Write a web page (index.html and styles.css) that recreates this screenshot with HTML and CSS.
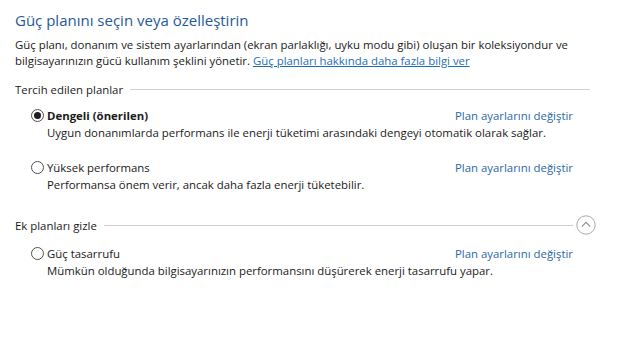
FILE: index.html
```html
<!DOCTYPE html>
<html lang="tr">
<head>
<meta charset="utf-8">
<link rel="stylesheet" href="styles.css">
</head>
<body>
<main class="page">
  <h1 class="title">Güç planını seçin veya özelleştirin</h1>
  <p class="intro">Güç planı, donanım ve sistem ayarlarından (ekran parlaklığı, uyku modu gibi) oluşan bir koleksiyondur ve bilgisayarınızın gücü kullanım şeklini yönetir. <a class="link" href="#">Güç planları hakkında daha fazla bilgi ver</a></p>

  <section class="group">
    <div class="group-head"><span class="group-label">Tercih edilen planlar</span><span class="rule"></span></div>
    <div class="plan">
      <div class="plan-row">
        <label class="radio-label bold"><span class="radio checked"></span>Dengeli (önerilen)</label>
        <a class="plan-link" href="#">Plan ayarlarını değiştir</a>
      </div>
      <div class="plan-desc">Uygun donanımlarda performans ile enerji tüketimi arasındaki dengeyi otomatik olarak sağlar.</div>
    </div>
    <div class="plan">
      <div class="plan-row">
        <label class="radio-label"><span class="radio"></span>Yüksek performans</label>
        <a class="plan-link" href="#">Plan ayarlarını değiştir</a>
      </div>
      <div class="plan-desc">Performansa önem verir, ancak daha fazla enerji tüketebilir.</div>
    </div>
  </section>

  <section class="group group2">
    <div class="group-head"><span class="group-label">Ek planları gizle</span><span class="rule short"></span>
      <span class="collapse"><svg width="20" height="20" viewBox="0 0 20 20"><circle cx="10" cy="10" r="9.2" fill="#fff" stroke="#a8a8a8" stroke-width="1"/><path d="M5.8 11.6 L10 7.4 L14.2 11.6" fill="none" stroke="#8c8c8c" stroke-width="1.1"/></svg></span>
    </div>
    <div class="plan">
      <div class="plan-row">
        <label class="radio-label"><span class="radio"></span>Güç tasarrufu</label>
        <a class="plan-link" href="#">Plan ayarlarını değiştir</a>
      </div>
      <div class="plan-desc">Mümkün olduğunda bilgisayarınızın performansını düşürerek enerji tasarrufu yapar.</div>
    </div>
  </section>
</main>
</body>
</html>
```
FILE: styles.css
```css
html, body {
  margin: 0;
  padding: 0;
  background: #fff;
}
body {
  font-family: "Open Sans", "Noto Sans", sans-serif;
  font-size: 11.4px;
  color: #1a1a1a;
}
.page {
  padding: 9px 0 0 15px;
  width: 575px;
}
.title {
  margin: 0;
  font-size: 15px;
  font-weight: 400;
  color: #1f5a95;
  line-height: 22px;
}
.intro {
  margin: 6px 0 0 0;
  line-height: 16px;
}
.link {
  color: #1e6fb0;
  text-decoration: underline;
}
.group {
  margin-top: 12px;
}
.group-head {
  display: flex;
  align-items: center;
  height: 16px;
}
.group-label {
  margin-right: 7px;
}
.rule {
  flex: 1;
  height: 1px;
  background: #d0d0d0;
}
.rule.short {
  margin-right: 3px;
}
.collapse {
  display: flex;
  margin-right: -6px;
}
.plan {
  margin: 9px 17px 0 16px;
}
.plan + .plan {
  margin-top: 16px;
}
.plan-row {
  display: flex;
  justify-content: space-between;
  align-items: center;
  height: 18px;
}
.radio-label {
  display: flex;
  align-items: center;
}
.bold {
  font-weight: 700;
}
.radio {
  width: 11px;
  height: 11px;
  border: 1px solid #505050;
  border-radius: 50%;
  margin-right: 3px;
  box-sizing: content-box;
  display: flex;
  align-items: center;
  justify-content: center;
}
.radio.checked::after {
  content: "";
  width: 7px;
  height: 7px;
  border-radius: 50%;
  background: #1e1e1e;
}
.plan-link {
  color: #2a68a8;
  text-decoration: none;
}
.plan-desc {
  margin: 0 0 0 16px;
  line-height: 18px;
}
.group2 {
  margin-top: 23px;
}
.group2 .plan {
  margin-top: 11px;
}
```
